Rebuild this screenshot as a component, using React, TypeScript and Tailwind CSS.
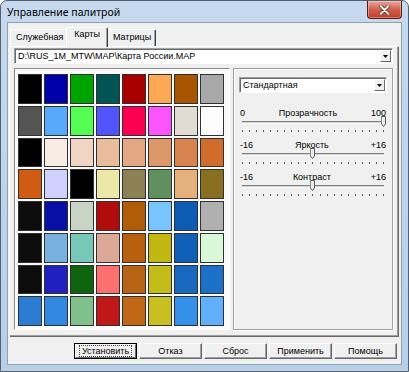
import React from "react";

const colors: string[][] = [
  ["#000000", "#0000a8", "#00a400", "#005454", "#a80000", "#fca854", "#a85400", "#a8a8a8"],
  ["#545454", "#58a8fc", "#54fc54", "#5454fc", "#fc0054", "#fc54fc", "#e0dcd4", "#fcfcfc"],
  ["#000000", "#f8ece4", "#f0d4c4", "#e8bc9c", "#e4a884", "#dc9868", "#d88450", "#d06c2c"],
  ["#d05c14", "#d0d0fc", "#000000", "#ece8a8", "#8c8054", "#609060", "#e4b07c", "#887020"],
  ["#0c0c0c", "#0810a8", "#c8d4c4", "#b00c0c", "#b05c08", "#78c4fc", "#0c5cb4", "#b0b0b0"],
  ["#0c0c0c", "#78b0e0", "#78c8b8", "#dca898", "#b86010", "#c0b810", "#1060b8", "#d8f8d8"],
  ["#0c0c0c", "#2020c0", "#106410", "#fc7070", "#b86414", "#c4bc18", "#1868c0", "#1c70c8"],
  ["#2c7cd4", "#3088e0", "#80c08c", "#c01818", "#c06818", "#c8c020", "#3490e8", "#60b0fc"],
];

const sliders = [
  { min: "0", max: "100", label: "Прозрачность", pct: 100 },
  { min: "-16", max: "+16", label: "Яркость", pct: 50 },
  { min: "-16", max: "+16", label: "Контраст", pct: 50 },
];

function ArrowBtn() {
  return (
    <div className="w-[11px] h-full bg-[#f0f0f0] border border-t-white border-l-white border-r-[#696969] border-b-[#696969] flex items-center justify-center">
      <svg width="5" height="3" viewBox="0 0 5 3">
        <polygon points="0,0 5,0 2.5,3" fill="#000" />
      </svg>
    </div>
  );
}

function Combo({ text }: { text: string }) {
  return (
    <div className="h-[16px] bg-white border border-t-[#a0a0a0] border-l-[#a0a0a0] border-r-white border-b-white shadow-[inset_1px_1px_0_#696969] flex items-stretch p-[1px] pl-[2px]">
      <div className="flex-1 text-[9px] leading-[12px] pl-[1px] text-black whitespace-nowrap overflow-hidden">{text}</div>
      <ArrowBtn />
    </div>
  );
}

function Slider({ min, max, label, pct }: { min: string; max: string; label: string; pct: number }) {
  return (
    <div className="flex flex-col h-[32px]">
      <div className="h-[11px] flex justify-between items-center text-[9px] leading-[11px] text-black">
        <span>{min}</span>
        <span>{label}</span>
        <span>{max}</span>
      </div>
      <div className="relative h-[8px] mt-[-1px] mx-[2px] flex items-center">
        <div className="w-full h-[3px] border-t border-t-[#808080] border-b border-b-white bg-[#d4d4d4]" />
        <svg
          className="absolute top-[-2px]"
          style={{ left: `calc(${pct}% - 3px)` }}
          width="5"
          height="11"
          viewBox="0 0 5 11"
        >
          <polygon points="0.5,0.5 4.5,0.5 4.5,8 2.5,10.5 0.5,8" fill="#ececec" stroke="#4a4a4a" strokeWidth="0.9" />
          <line x1="1.2" y1="1.2" x2="1.2" y2="7.6" stroke="#fff" strokeWidth="0.8" />
        </svg>
      </div>
      <div className="mt-[4px] mx-[2px] h-[2px] flex justify-between items-end">
        {Array.from({ length: 21 }).map((_, i) => (
          <span key={i} className="w-[1px] h-[2px] bg-[#606060]" />
        ))}
      </div>
    </div>
  );
}

function Btn({ text, focused }: { text: string; focused?: boolean }) {
  if (focused) {
    return (
      <div className="w-[63px] h-[16px] border border-black">
        <div className="w-full h-full bg-[#f0f0f0] border border-t-white border-l-white border-r-[#696969] border-b-[#696969] flex items-center justify-center">
          <div className="border border-dotted border-[#444] px-[2px] text-[9px] leading-[10px] text-black">{text}</div>
        </div>
      </div>
    );
  }
  return (
    <div className="w-[63px] h-[16px] bg-[#f0f0f0] border border-t-white border-l-white border-r-[#696969] border-b-[#696969] shadow-[inset_-1px_-1px_0_#a0a0a0] flex items-center justify-center text-[9px] leading-[11px] text-black">
      {text}
    </div>
  );
}

export default function App() {
  return (
    <div className="w-[409px] h-[372px] flex flex-col bg-gradient-to-b from-[#c6d9ef] to-[#b8cfe8] border border-[#52606f] rounded-t-[7px] font-['Liberation_Sans',Arial,sans-serif] overflow-hidden">
      {/* Title bar */}
      <div className="h-[21px] flex items-start justify-between pl-[6px] pr-[6px]">
        <div className="pt-[4px] text-[10.5px] leading-[14px] text-black font-['Noto_Sans',sans-serif]">Управление палитрой</div>
        <div className="w-[35px] h-[18px] rounded-b-[4px] border border-t-0 border-[#5a1a12] bg-gradient-to-b from-[#e9a899] via-[#d0604e] to-[#c23a24] shadow-[inset_0_0_0_1px_rgba(255,255,255,0.35)] flex items-center justify-center">
          <svg width="11" height="10" viewBox="0 0 11 10">
            <path d="M1.5 1 L9.5 9 M9.5 1 L1.5 9" stroke="#6a1a10" strokeWidth="3.2" strokeLinecap="round" />
            <path d="M1.5 1 L9.5 9 M9.5 1 L1.5 9" stroke="#ffffff" strokeWidth="1.8" strokeLinecap="round" />
          </svg>
        </div>
      </div>

      {/* Client area */}
      <div className="flex-1 mx-[6px] mb-[6px] bg-[#f0f0f0] border border-[#8da2b9] flex flex-col">
        {/* Tabs */}
        <div className="h-[23px] flex items-end pl-[2px] text-[9px] leading-[11px] text-black">
          <div className="h-[17px] pt-[2px] px-[5px] border-t border-l border-white rounded-tl-[2px]">Служебная</div>
          <div className="relative z-10 -ml-[2px] mb-[-1px] h-[20px] pt-[1px] px-[7px] bg-[#f0f0f0] border-t border-l border-white border-r border-r-[#404040] rounded-t-[2px] shadow-[inset_-1px_0_0_#a0a0a0]">Карты</div>
          <div className="h-[17px] pt-[2px] pl-[5px] pr-[4px] border-t border-white border-r border-r-[#404040] rounded-tr-[2px] shadow-[inset_-1px_0_0_#a0a0a0]">Матрицы</div>
        </div>

        {/* Tab page */}
        <div className="ml-[1px] mr-[3px] h-[290px] border border-t-white border-l-white border-r-[#a0a0a0] border-b-[#a0a0a0] shadow-[1px_1px_0_#696969] flex flex-col px-[4px] pt-[1px]">
          <Combo text="D:\RUS_1M_MTW\MAP\Карта России.MAP" />

          <div className="mt-[4px] flex gap-[3px] h-[262px]">
            {/* Color grid */}
            <div className="w-[216px] h-full bg-[#fafafa] border border-t-[#8a8a8a] border-l-[#8a8a8a] border-r-white border-b-white pl-[3px] pr-[5px] pt-[5px] pb-[3px]">
              <div className="grid grid-cols-8 grid-rows-8 gap-x-[2px] gap-y-[2px] h-[252px]">
                {colors.flat().map((c, i) => (
                  <div key={i} className="border border-[#303030]" style={{ backgroundColor: c }} />
                ))}
              </div>
            </div>

            {/* Right panel */}
            <div className="flex-1 h-full border border-[#a0a0a0] shadow-[inset_1px_1px_0_#fff,1px_1px_0_#fff] pt-[8px] px-[5px]">
              <Combo text="Стандартная" />
              <div className="mt-[15px] px-[1px] flex flex-col">
                {sliders.map((s, i) => (
                  <Slider key={i} {...s} />
                ))}
              </div>
            </div>
          </div>
        </div>

        {/* Buttons */}
        <div className="flex-1 flex items-start justify-end gap-[2px] pt-[7px] pr-[4px]">
          <Btn text="Установить" focused />
          <Btn text="Отказ" />
          <Btn text="Сброс" />
          <Btn text="Применить" />
          <Btn text="Помощь" />
        </div>
      </div>
    </div>
  );
}
